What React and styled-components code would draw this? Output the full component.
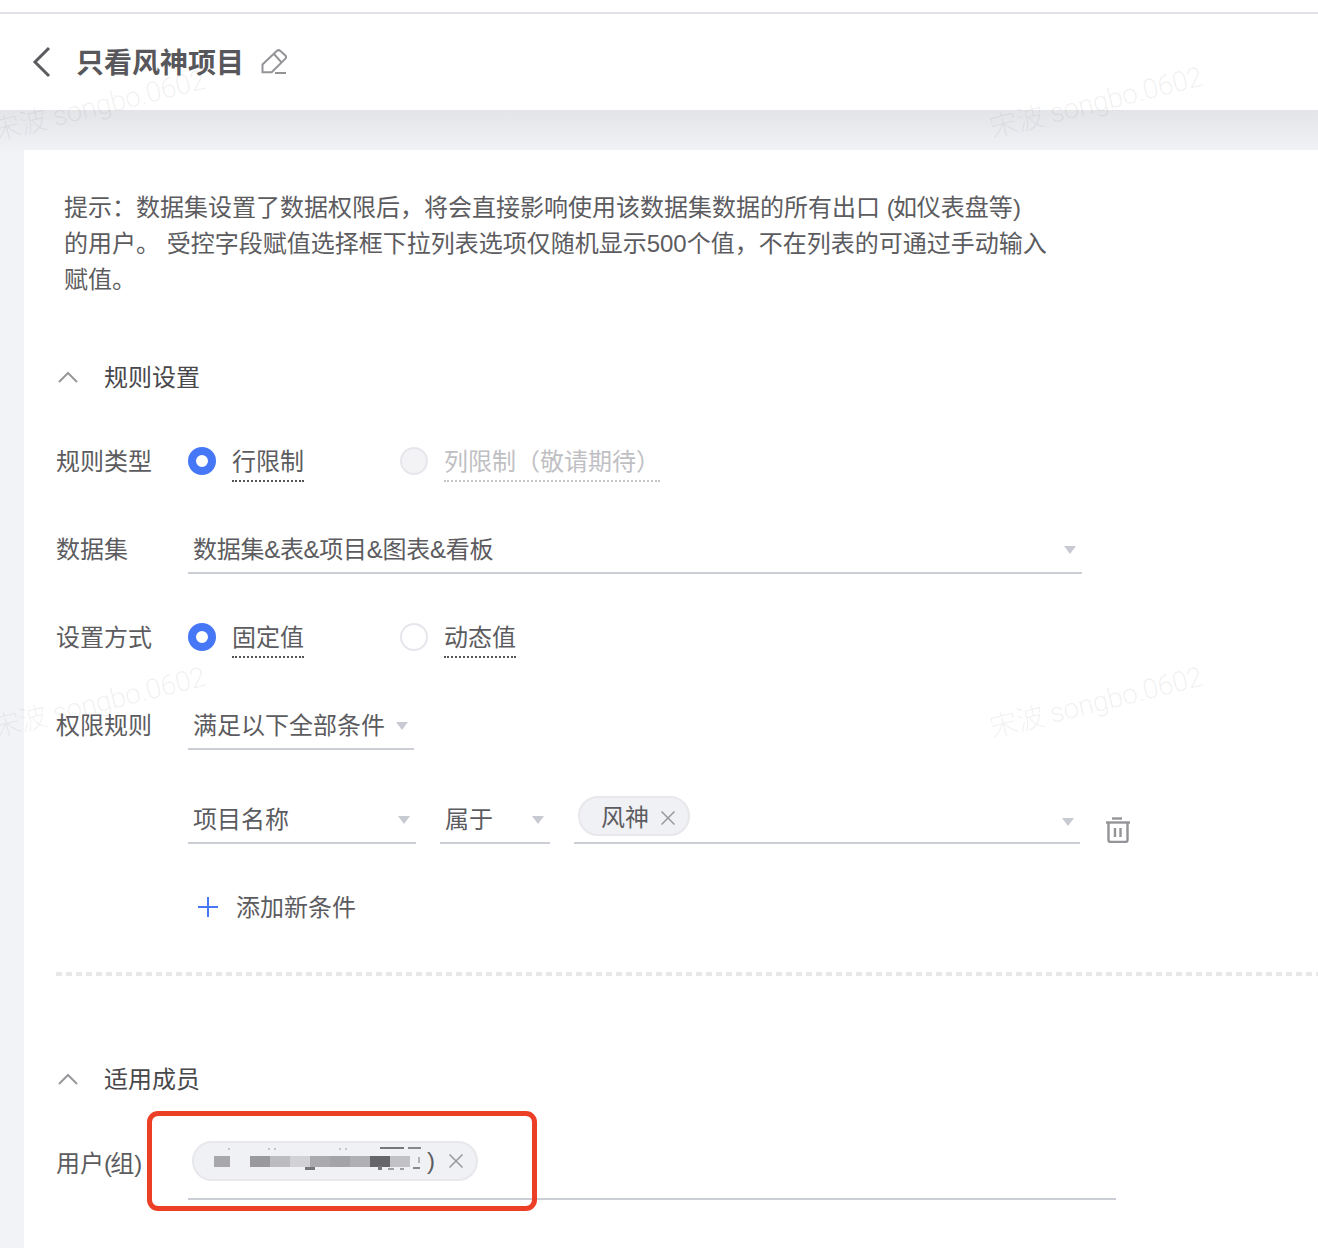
import styled, { createGlobalStyle } from "styled-components";

const GlobalStyle = createGlobalStyle`
  html, body { margin: 0; padding: 0; }
  body { width: 1318px; height: 1248px; overflow: hidden; background: #f4f5f8; font-family: "Liberation Sans", "Noto Sans CJK SC", sans-serif; color: #5c5c60; }
  * { box-sizing: border-box; }
`;

const marks = [
  { x: -10, y: 89 },
  { x: 987, y: 86 },
  { x: -10, y: 686 },
  { x: 987, y: 686 },
];

const blocks = ["#9a9a9e", "#bcbcc0", "#d2d2d6", "#aaaaae", "#a4a4a8", "#b0b0b4", "#66666a", "#c2c2c6"];

// what is left of the name around the blur, offsets from the tag's inner corner
const scraps = [
  { x: 34, y: 5, w: 2, h: 2, c: "#c4c4c8" },
  { x: 74, y: 5, w: 2, h: 2, c: "#c4c4c8" },
  { x: 80, y: 5, w: 2, h: 2, c: "#c4c4c8" },
  { x: 145, y: 5, w: 2, h: 2, c: "#c4c4c8" },
  { x: 151, y: 5, w: 2, h: 2, c: "#c4c4c8" },
  { x: 186, y: 4, w: 24, h: 2, c: "#77777b" },
  { x: 214, y: 4, w: 13, h: 2, c: "#88888c" },
  { x: 111, y: 24, w: 10, h: 3, c: "#77777b" },
  { x: 184, y: 23, w: 4, h: 4, c: "#77777b" },
  { x: 194, y: 25, w: 6, h: 2, c: "#a0a0a4" },
  { x: 206, y: 25, w: 4, h: 2, c: "#a0a0a4" },
  { x: 219, y: 24, w: 7, h: 2, c: "#88888c" },
  { x: 224, y: 14, w: 2, h: 6, c: "#b4b4b8" },
];

function Caret() {
  return <CaretShape />;
}

function CloseIcon() {
  return (
    <svg width="14" height="14" viewBox="0 0 14 14" fill="none" stroke="#98989c" strokeWidth="1.500">
      <path d="M0.500 0.500L13.500 13.500M13.500 0.500L0.500 13.500" />
    </svg>
  );
}

function SectionArrow() {
  return (
    <svg width="20" height="12" viewBox="0 0 20 12" fill="none" stroke="#98989c" strokeWidth="2">
      <path d="M1 11L10 2L19 11" />
    </svg>
  );
}

function Radio({ checked, disabled, children }) {
  return (
    <RadioOption>
      <RadioDot $checked={checked} $disabled={disabled} />
      <RadioText $disabled={disabled}>{children}</RadioText>
    </RadioOption>
  );
}

export default function App() {
  return (
    <Page>
      <GlobalStyle />
      <TopStrip />
      <Header>
        <svg width="20" height="32" viewBox="0 0 20 32" fill="none" stroke="#5c5c60" strokeWidth="3">
          <path d="M17 2L3 16L17 30" />
        </svg>
        <Title>只看风神项目</Title>
        <svg width="26" height="26" viewBox="0 0 26 26" fill="none" stroke="#949498" strokeWidth="2">
          <path d="M1.500 23.300V15.500L15.700 2C16.900 0.900 18.300 0.900 19.400 2L24.400 6.500C25.300 7.500 25.300 8.700 24.400 9.600L10.700 23.300H1.500Z" />
          <path d="M13 5L20.700 13.700" />
          <path d="M14 24H25" />
        </svg>
      </Header>
      <Card>
        <Hint>
          提示：数据集设置了数据权限后，将会直接影响使用该数据集数据的所有出口 <Paren>(</Paren>如仪表盘等<Paren>)</Paren><br />
          的用户。 受控字段赋值选择框下拉列表选项仅随机显示500个值，不在列表的可通过手动输入<br />
          赋值。
        </Hint>

        <SectionHead $top={55}>
          <SectionArrow />
          <SectionTitle>规则设置</SectionTitle>
        </SectionHead>

        <Rows>
          <Row>
            <Label>规则类型</Label>
            <Radio checked>行限制</Radio>
            <Radio disabled>列限制（敬请期待）</Radio>
          </Row>
          <Row>
            <Label>数据集</Label>
            <Select $width={894}>
              <TightText>数据集&amp;表&amp;项目&amp;图表&amp;看板</TightText>
              <Caret />
            </Select>
          </Row>
          <Row>
            <Label>设置方式</Label>
            <Radio checked>固定值</Radio>
            <Radio>动态值</Radio>
          </Row>
          <Row>
            <Label>权限规则</Label>
            <Select $width={226}>
              <span>满足以下全部条件</span>
              <Caret />
            </Select>
          </Row>
        </Rows>

        <Condition>
          <Select $width={228}>
            <span>项目名称</span>
            <Caret />
          </Select>
          <Select $width={110}>
            <span>属于</span>
            <Caret />
          </Select>
          <TagSelect>
            <Tag>
              风神
              <CloseIcon />
            </Tag>
            <Caret />
          </TagSelect>
          <TrashButton>
            <svg width="26" height="26" viewBox="0 0 26 26" fill="none" stroke="#949498" strokeWidth="2.400">
              <path d="M7 1.500H17" />
              <path d="M1 5.500H25" />
              <path d="M3.500 5.500V23C3.500 24.200 4.300 25 5.500 25H20.500C21.700 25 22.500 24.200 22.500 23V5.500" />
              <path d="M10 11V20M15.500 11V20" />
            </svg>
          </TrashButton>
        </Condition>

        <AddRow>
          <svg width="20" height="20" viewBox="0 0 20 20" fill="none" stroke="#4577f6" strokeWidth="2">
            <path d="M10 0V20M0 10H20" />
          </svg>
          <AddText>添加新条件</AddText>
        </AddRow>

        <Divider />

        <SectionHead $top={79}>
          <SectionArrow />
          <SectionTitle>适用成员</SectionTitle>
        </SectionHead>

        <UserRow>
          <UserLabel>用户<Paren>(</Paren>组<Paren>)</Paren></UserLabel>
          <UserField>
            <UserTag>
              {scraps.map((s) => (
                <Scrap key={`${s.x}-${s.y}`} $x={s.x} $y={s.y} $w={s.w} $h={s.h} $c={s.c} />
              ))}
              <FirstBlock />
              <BlurredName>
                {blocks.map((color, i) => (
                  <Pixel key={i} $color={color} />
                ))}
              </BlurredName>
              <NameEnd>)</NameEnd>
              <CloseIcon />
            </UserTag>
          </UserField>
        </UserRow>
      </Card>

      <RedBox />
      {marks.map((m) => (
        <Watermark key={`${m.x}-${m.y}`} $x={m.x} $y={m.y}>宋波 songbo.0602</Watermark>
      ))}
    </Page>
  );
}

const Page = styled.div`
  position: relative;
  width: 1318px;
  height: 1248px;
  overflow: hidden;
  background: linear-gradient(#e3e4e8 110px, #f2f3f6 155px);
`;
const TopStrip = styled.div`
  height: 14px;
  background: #fff;
  border-bottom: 2px solid #e0e0e6;
`;
const Header = styled.div`
  display: flex;
  align-items: center;
  height: 96px;
  padding-left: 32px;
  background: #fff;
  svg:last-child { margin-left: 17px; }
`;
const Title = styled.h1`
  margin: 4px 0 0 24px;
  font-size: 28px;
  font-weight: 700;
  line-height: 40px;
  color: #58585c;
`;
const Card = styled.div`
  margin: 40px 0 0 24px;
  height: 1098px;
  padding-top: 40px;
  background: #fff;
`;
const Hint = styled.p`
  margin: 0 0 0 40px;
  font-size: 24px;
  line-height: 36px;
  white-space: nowrap;
  color: #5c5c60;
`;
const Paren = styled.span`
  letter-spacing: -1.800px;
`;
const TightText = styled.span`
  letter-spacing: -0.280px;
`;
const SectionHead = styled.div`
  display: flex;
  align-items: center;
  height: 48px;
  margin-top: ${(p) => p.$top}px;
  padding-left: 34px;
`;
const SectionTitle = styled.h2`
  margin: 2px 0 0 26px;
  font-size: 24px;
  font-weight: 400;
  line-height: 36px;
  color: #48484c;
`;
const Rows = styled.div`
  margin-top: 16px;
`;
const Row = styled.div`
  display: flex;
  align-items: center;
  height: 88px;
  padding-left: 32px;
`;
const Label = styled.div`
  flex: none;
  width: 132px;
  padding-top: 2px;
  font-size: 24px;
  line-height: 36px;
  color: #5c5c60;
`;
const RadioOption = styled.label`
  display: flex;
  align-items: center;
  width: 212px;
  flex: none;
`;
const RadioDot = styled.span`
  flex: none;
  width: 28px;
  height: 28px;
  border-radius: 50%;
  margin-right: 16px;
  background: ${(p) => (p.$disabled ? "#f3f3f5" : "#fff")};
  border: ${(p) => (p.$checked ? "8px solid #4577f6" : "2px solid #e6e6ec")};
`;
const RadioText = styled.span`
  flex: none;
  margin-top: 3px;
  padding-top: 1px;
  font-size: 24px;
  line-height: 36px;
  white-space: nowrap;
  color: ${(p) => (p.$disabled ? "#c0c0c4" : "#5c5c60")};
  border-bottom: 2px dotted ${(p) => (p.$disabled ? "#c4c4c8" : "#55555a")};
`;
const Select = styled.div`
  flex: none;
  display: flex;
  align-items: center;
  justify-content: space-between;
  width: ${(p) => p.$width}px;
  height: 48px;
  margin-top: 2px;
  padding: 2px 6px 0 5px;
  font-size: 24px;
  line-height: 36px;
  color: #5c5c60;
  border-bottom: 2px solid #cbced4;
`;
const CaretShape = styled.span`
  flex: none;
  width: 0;
  height: 0;
  border-left: 6.500px solid transparent;
  border-right: 6.500px solid transparent;
  border-top: 8px solid #c8cad2;
`;
const Condition = styled.div`
  display: flex;
  align-items: flex-end;
  height: 30px;
  margin-top: 45px;
  padding-left: 164px;
  gap: 24px;
`;
const TagSelect = styled.div`
  flex: none;
  display: flex;
  align-items: flex-start;
  justify-content: space-between;
  width: 506px;
  height: 48px;
  padding: 0 6px 0 4px;
  border-bottom: 2px solid #cbced4;
  ${CaretShape} { margin-top: 22px; }
`;
const Tag = styled.span`
  display: flex;
  align-items: center;
  gap: 12px;
  height: 40px;
  padding: 3px 13px 0 21px;
  font-size: 24px;
  line-height: 32px;
  color: #5c5c60;
  background: #f0f1f5;
  border: 2px solid #e8e8ec;
  border-radius: 20px;
`;
const TrashButton = styled.button`
  flex: none;
  display: flex;
  padding: 0;
  margin: 0 0 1px 1px;
  background: none;
  border: 0;
`;
const AddRow = styled.div`
  display: flex;
  align-items: center;
  gap: 18px;
  height: 48px;
  margin-top: 39px;
  padding-left: 174px;
  font-size: 24px;
  color: #5c5c60;
`;
const AddText = styled.span`
  margin-top: 2px;
  line-height: 36px;
`;
const Divider = styled.div`
  height: 4px;
  margin: 41px 0 0 32px;
  background: repeating-linear-gradient(90deg, #e8e8ea 0 6px, transparent 6px 10px);
`;
const UserRow = styled.div`
  display: flex;
  margin-top: 12px;
  padding-left: 32px;
`;
const UserLabel = styled.div`
  flex: none;
  width: 132px;
  padding-top: 31px;
  font-size: 24px;
  line-height: 36px;
  color: #5c5c60;
`;
const UserField = styled.div`
  flex: none;
  width: 928px;
  height: 85px;
  padding: 26px 0 0 4px;
  border-bottom: 2px solid #cbced4;
`;
const UserTag = styled.div`
  position: relative;
  display: flex;
  align-items: center;
  width: 286px;
  height: 40px;
  padding-left: 20px;
  background: #f0f1f5;
  border: 2px solid #e8e8ec;
  border-radius: 20px;
`;
const Scrap = styled.span`
  position: absolute;
  left: ${(p) => p.$x}px;
  top: ${(p) => p.$y}px;
  width: ${(p) => p.$w}px;
  height: ${(p) => p.$h}px;
  background: ${(p) => p.$c};
`;
const FirstBlock = styled.span`
  flex: none;
  width: 16px;
  height: 11px;
  background: #a8a8ac;
`;
const BlurredName = styled.span`
  display: flex;
  flex: none;
  margin-left: 20px;
  height: 11px;
`;
const Pixel = styled.span`
  flex: none;
  width: 20px;
  background: ${(p) => p.$color};
`;
const NameEnd = styled.span`
  flex: none;
  width: 28px;
  margin-right: 11px;
  padding-right: 3px;
  text-align: right;
  font-size: 24px;
  color: #5c5c60;
`;
const RedBox = styled.div`
  position: absolute;
  left: 147px;
  top: 1111px;
  width: 390px;
  height: 100px;
  border: 5px solid #ec4026;
  border-radius: 11px;
  pointer-events: none;
`;
const Watermark = styled.div`
  position: absolute;
  left: ${(p) => p.$x}px;
  top: ${(p) => p.$y}px;
  font-family: Roboto, "Noto Sans CJK SC", sans-serif;
  font-size: 28px;
  font-weight: 300;
  letter-spacing: -0.400px;
  line-height: 34px;
  white-space: nowrap;
  color: rgba(40, 40, 50, 0.07);
  transform: rotate(-14deg);
  pointer-events: none;
`;
